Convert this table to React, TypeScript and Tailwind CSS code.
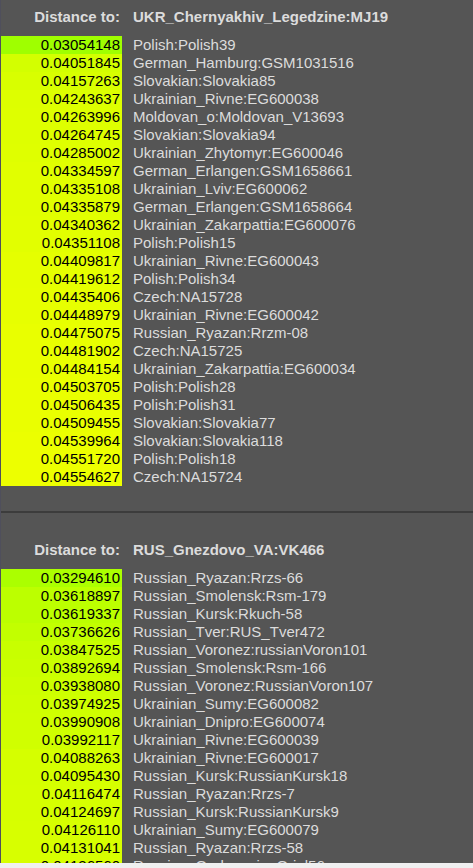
type Row = [number, string]

const tables: { target: string; rows: Row[] }[] = [
  {
    target: "UKR_Chernyakhiv_Legedzine:MJ19",
    rows: [
      [0.03054148, "Polish:Polish39"],
      [0.04051845, "German_Hamburg:GSM1031516"],
      [0.04157263, "Slovakian:Slovakia85"],
      [0.04243637, "Ukrainian_Rivne:EG600038"],
      [0.04263996, "Moldovan_o:Moldovan_V13693"],
      [0.04264745, "Slovakian:Slovakia94"],
      [0.04285002, "Ukrainian_Zhytomyr:EG600046"],
      [0.04334597, "German_Erlangen:GSM1658661"],
      [0.04335108, "Ukrainian_Lviv:EG600062"],
      [0.04335879, "German_Erlangen:GSM1658664"],
      [0.04340362, "Ukrainian_Zakarpattia:EG600076"],
      [0.04351108, "Polish:Polish15"],
      [0.04409817, "Ukrainian_Rivne:EG600043"],
      [0.04419612, "Polish:Polish34"],
      [0.04435406, "Czech:NA15728"],
      [0.04448979, "Ukrainian_Rivne:EG600042"],
      [0.04475075, "Russian_Ryazan:Rrzm-08"],
      [0.04481902, "Czech:NA15725"],
      [0.04484154, "Ukrainian_Zakarpattia:EG600034"],
      [0.04503705, "Polish:Polish28"],
      [0.04506435, "Polish:Polish31"],
      [0.04509455, "Slovakian:Slovakia77"],
      [0.04539964, "Slovakian:Slovakia118"],
      [0.0455172, "Polish:Polish18"],
      [0.04554627, "Czech:NA15724"],
    ],
  },
  {
    target: "RUS_Gnezdovo_VA:VK466",
    rows: [
      [0.0329461, "Russian_Ryazan:Rrzs-66"],
      [0.03618897, "Russian_Smolensk:Rsm-179"],
      [0.03619337, "Russian_Kursk:Rkuch-58"],
      [0.03736626, "Russian_Tver:RUS_Tver472"],
      [0.03847525, "Russian_Voronez:russianVoron101"],
      [0.03892694, "Russian_Smolensk:Rsm-166"],
      [0.0393808, "Russian_Voronez:RussianVoron107"],
      [0.03974925, "Ukrainian_Sumy:EG600082"],
      [0.03990908, "Ukrainian_Dnipro:EG600074"],
      [0.03992117, "Ukrainian_Rivne:EG600039"],
      [0.04088263, "Ukrainian_Rivne:EG600017"],
      [0.0409543, "Russian_Kursk:RussianKursk18"],
      [0.04116474, "Russian_Ryazan:Rrzs-7"],
      [0.04124697, "Russian_Kursk:RussianKursk9"],
      [0.0412611, "Ukrainian_Sumy:EG600079"],
      [0.04131041, "Russian_Ryazan:Rrzs-58"],
      [0.0413656, "Russian_Orel:russianOriel56"],
    ],
  },
]

// greener for closer samples, towards yellow as distance grows
function cellColor(v: number) {
  const r = Math.max(0, Math.min(255, Math.round(v * 5200)))
  return `rgb(${r},255,0)`
}

function DistanceTable({ target, rows }: { target: string; rows: Row[] }) {
  return (
    <div className="grid grid-cols-[121px_1fr] gap-x-[11px] leading-[18px]">
      <div className="pr-[2px] text-right font-bold text-[#dcdcdc]">Distance to:</div>
      <div className="font-bold text-[#dcdcdc]">{target}</div>
      <div className="col-span-2 h-[10px]" />
      {rows.map(([v, name]) => (
        <div key={name} className="contents">
          <div className="pr-[2px] text-right text-black" style={{ backgroundColor: cellColor(v) }}>
            {v.toFixed(8)}
          </div>
          <div className="whitespace-nowrap text-[#dcdcdc]">{name}</div>
        </div>
      ))}
    </div>
  )
}

export default function App() {
  return (
    <div className="flex h-[868px] w-[473px] flex-col overflow-hidden bg-[#f0f0f0] font-['Liberation_Sans',Arial,sans-serif] text-[15px]">
      <div className="flex-1 overflow-hidden border-l border-[#4f4f5c] bg-[#555555]">
        <div className="pt-[8px]">
          <DistanceTable {...tables[0]} />
        </div>
        <div className="mt-[25px] h-[2px] bg-[#3c3c3c]" />
        <div className="pt-[28px]">
          <DistanceTable {...tables[1]} />
        </div>
      </div>
      <div className="h-[5px] bg-[#f0f0f0]" />
    </div>
  )
}
